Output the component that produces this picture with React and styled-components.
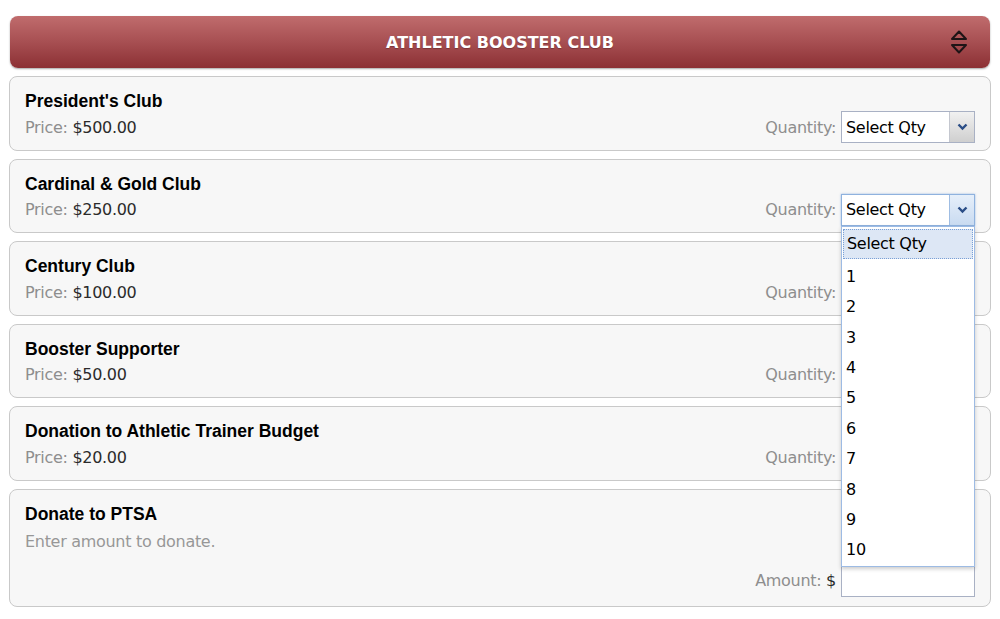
import React from "react";
import styled, { createGlobalStyle } from "styled-components";

const GlobalStyle = createGlobalStyle`
    html, body {
        margin: 0;
        padding: 0;
        background: #ffffff;
    }
    * {
        box-sizing: border-box;
    }
`;

const Page = styled.div`
    width: 1000px;
    padding: 16px 9px 0 9px;
    display: flex;
    flex-direction: column;
    gap: 8px;
`;

const Header = styled.div`
    height: 52px;
    margin: 0 1px 0 1px;
    border-radius: 8px;
    background: linear-gradient(to bottom, #c06c6d 0%, #a74f52 50%, #8c3034 100%);
    box-shadow: 0 1px 2px rgba(0, 0, 0, 0.35);
    display: flex;
    align-items: center;
    justify-content: center;
    position: relative;
`;

const HeaderTitle = styled.h2`
    margin: 0;
    font-family: "DejaVu Sans", Verdana, sans-serif;
    font-size: 16px;
    font-weight: bold;
    color: #ffffff;
    text-shadow: 0 1px 1px rgba(0, 0, 0, 0.25);
`;

const Toggle = styled.span`
    position: absolute;
    right: 21px;
    top: 13px;
    display: flex;
`;

const Card = styled.div`
    background: #f7f7f7;
    border: 1.5px solid #c9c9c9;
    border-radius: 8px;
    padding: ${props => props.tall ? "14px 15px 9px 15px" : "14px 15px 6.5px 15px"};
    display: flex;
    flex-direction: column;
`;

const Name = styled.div`
    font-family: "Liberation Sans", Arial, sans-serif;
    font-weight: bold;
    font-size: 17.5px;
    line-height: 20px;
    color: #000;
`;

const Row = styled.div`
    display: flex;
    align-items: center;
    justify-content: space-between;
    height: 32px;
    margin-top: ${props => props.gap || 0}px;
`;

const Muted = styled.span`
    font-family: "DejaVu Sans", Verdana, sans-serif;
    font-size: 16px;
    color: #8e8e8e;
    letter-spacing: -0.3px;
`;

const Value = styled.span`
    color: #2b2b2b;
`;

const Desc = styled.div`
    font-family: "DejaVu Sans", Verdana, sans-serif;
    font-size: 16px;
    letter-spacing: -0.3px;
    color: #979797;
    line-height: 20px;
    margin-top: 8px;
`;

const Field = styled.div`
    display: flex;
    align-items: center;
    gap: 5px;
`;

const SelectWrap = styled.div`
    position: relative;
`;

const SelectBox = styled.div`
    width: 134px;
    height: 32px;
    display: flex;
    background: #ffffff;
    border: 1px solid ${props => props.open ? "#8fb2de" : "#a9b1c4"};
    box-shadow: ${props => props.open ? "0 0 2px rgba(90, 140, 210, 0.6)" : "none"};
`;

const SelectText = styled.span`
    flex: 1;
    padding-left: 4px;
    display: flex;
    align-items: center;
    font-family: "DejaVu Sans", Verdana, sans-serif;
    font-size: 16px;
    letter-spacing: -0.3px;
    color: #000;
`;

const Arrow = styled.span`
    width: 25px;
    border-left: 1px solid ${props => props.open ? "#9fbde3" : "#c4c7cf"};
    background: ${props => props.open
        ? "linear-gradient(to bottom, #e6effa, #c9dbf1)"
        : "linear-gradient(to bottom, #f1f1f1, #cfcfcf)"};
    display: flex;
    align-items: center;
    justify-content: center;
`;

const Menu = styled.ul`
    position: absolute;
    top: 32px;
    left: 0;
    width: 134px;
    margin: 0;
    padding: 2px 1px 1px 1px;
    list-style: none;
    background: #ffffff;
    border: 1.5px solid #9dbbe4;
    box-shadow: 0 2px 4px rgba(0, 0, 0, 0.2);
    z-index: 10;
`;

const Option = styled.li`
    height: ${props => props.first ? 30 : 30.4}px;
    margin-bottom: ${props => props.first ? 3 : 0}px;
    padding-left: 3px;
    display: flex;
    align-items: ${props => props.first ? "center" : "flex-end"};
    padding-bottom: ${props => props.first ? 0 : 6}px;
    font-family: "DejaVu Sans", Verdana, sans-serif;
    font-size: 16px;
    letter-spacing: -0.3px;
    color: #000;
    background: ${props => props.first ? "#dde7f5" : "transparent"};
    border: ${props => props.first ? "1px dotted #7aa0d6" : "none"};
`;

const Input = styled.input`
    width: 134px;
    height: 32px;
    border: 1px solid #a9b1c4;
    background: #fff;
    outline: none;
`;

const Chevron = ({ color }) => (
    <svg width="11" height="8" viewBox="0 0 11 8">
        <path d="M1.5 1.5 L5.5 5.5 L9.5 1.5" fill="none" stroke={color} strokeWidth="2.4" />
    </svg>
);

const UpDown = () => (
    <svg width="20" height="26" viewBox="0 0 20 26">
        <path d="M3 10 L10 2.5 L17 10 Z" fill="none" stroke="#1e1416" strokeWidth="2" strokeLinejoin="round" />
        <path d="M3 16 L10 23.5 L17 16 Z" fill="none" stroke="#1e1416" strokeWidth="2" strokeLinejoin="round" />
    </svg>
);

const items = [
    { name: "President's Club", price: "$500.00" },
    { name: "Cardinal & Gold Club", price: "$250.00", open: true },
    { name: "Century Club", price: "$100.00", covered: true },
    { name: "Booster Supporter", price: "$50.00", covered: true },
    { name: "Donation to Athletic Trainer Budget", price: "$20.00", covered: true },
];

const options = ["1", "2", "3", "4", "5", "6", "7", "8", "9", "10"];

// selects that sit under the open menu draw only their box
const QtySelect = ({ open, covered }) => (
    <SelectWrap>
        <SelectBox open={open}>
            {!covered && <SelectText>Select Qty</SelectText>}
            {!covered && <Arrow open={open}><Chevron color="#2a4d86" /></Arrow>}
        </SelectBox>
        {open && (
            <Menu>
                <Option first>Select Qty</Option>
                {options.map(o => <Option key={o}>{o}</Option>)}
            </Menu>
        )}
    </SelectWrap>
);

const App = () => (
    <>
        <GlobalStyle />
        <Page>
            <Header>
                <HeaderTitle>ATHLETIC BOOSTER CLUB</HeaderTitle>
                <Toggle><UpDown /></Toggle>
            </Header>
            {items.map((item, index) => (
                <Card key={index}>
                    <Name>{item.name}</Name>
                    <Row>
                        <Muted>Price: <Value>{item.price}</Value></Muted>
                        <Field>
                            <Muted>Quantity:</Muted>
                            <QtySelect open={item.open} covered={item.covered} />
                        </Field>
                    </Row>
                </Card>
            ))}
            <Card tall>
                <Name>Donate to PTSA</Name>
                <Desc>Enter amount to donate.</Desc>
                <Row gap={13}>
                    <span />
                    <Field>
                        <Muted>Amount: <Value>$</Value></Muted>
                        <Input />
                    </Field>
                </Row>
            </Card>
        </Page>
    </>
);

export default App;
